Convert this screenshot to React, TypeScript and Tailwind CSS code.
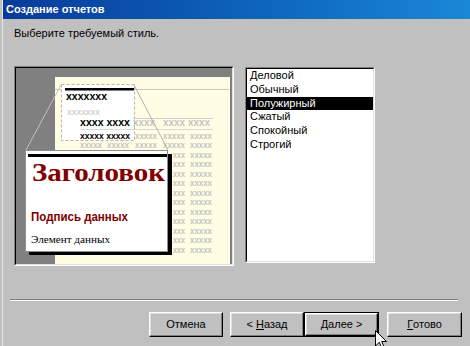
import React from "react";

const grayCols = [135, 163, 190];
const rowYs = [157.5, 167, 176.5, 186, 195.5, 205, 214.5, 224, 233.5, 243, 252.5];

function Preview() {
  return (
    <svg width={216} height={196} viewBox="16 68 216 196" className="block">
      <rect x={16} y={68} width={216} height={196} fill="#808080" />
      <rect x={55} y={77} width={175} height={187} fill="#fffee4" />
      <line x1={55} y1={89.5} x2={229} y2={89.5} stroke="#c8c8c8" />
      <rect x={61.5} y={84.5} width={73} height={56} fill="#ffffff" stroke="#b4b4b4" strokeDasharray="3 2" />
      <rect x={65} y={88} width={69} height={2.5} fill="#000" />
      <text x={66} y={100} fontFamily="Liberation Sans, sans-serif" fontWeight="bold" fontSize={10} fill="#000" textLength={41} lengthAdjust="spacingAndGlyphs">xxxxxxx</text>
      <text x={67} y={115} fontFamily="Liberation Sans, sans-serif" fontSize={8.5} fill="#c4c4c4" textLength={33} lengthAdjust="spacingAndGlyphs">xxxxxxx</text>
      <line x1={133} y1={118.5} x2={213} y2={118.5} stroke="#d0d0d0" />
      <text x={80} y={126} fontFamily="Liberation Sans, sans-serif" fontWeight="bold" fontSize={10} fill="#000" textLength={50} lengthAdjust="spacingAndGlyphs">xxxx xxxx</text>
      {[133, 163, 188].map((x) => (
        <text key={x} x={x} y={126} fontFamily="Liberation Sans, sans-serif" fontWeight="bold" fontSize={10} fill="#c4c4c4" textLength={22} lengthAdjust="spacingAndGlyphs">xxxx</text>
      ))}
      <line x1={80} y1={129.5} x2={213} y2={129.5} stroke="#d8d8d8" />
      <text x={80} y={139} fontFamily="Liberation Sans, sans-serif" fontWeight="bold" fontSize={8.5} fill="#000" textLength={50} lengthAdjust="spacingAndGlyphs">xxxxx xxxxx</text>
      {grayCols.map((x) => (
        <text key={x} x={x} y={139} fontFamily="Liberation Sans, sans-serif" fontWeight="bold" fontSize={8.5} fill="#c4c4c4" textLength={22} lengthAdjust="spacingAndGlyphs">xxxxx</text>
      ))}
      {[80, 107, 135, 163, 190].map((x) => (
        <text key={x} x={x} y={148} fontFamily="Liberation Sans, sans-serif" fontWeight="bold" fontSize={8.5} fill="#c4c4c4" textLength={22} lengthAdjust="spacingAndGlyphs">xxxxx</text>
      ))}
      {rowYs.map((y) => (
        <g key={y}>
          <text x={173} y={y} fontFamily="Liberation Sans, sans-serif" fontWeight="bold" fontSize={8.5} fill="#c4c4c4" textLength={12} lengthAdjust="spacingAndGlyphs">xxx</text>
          <text x={190} y={y} fontFamily="Liberation Sans, sans-serif" fontWeight="bold" fontSize={8.5} fill="#c4c4c4" textLength={22} lengthAdjust="spacingAndGlyphs">xxxxx</text>
        </g>
      ))}
      <line x1={61} y1={85} x2={26} y2={150} stroke="#c0c0c0" />
      <line x1={134} y1={85} x2={168} y2={150} stroke="#b0b0b0" />
      {/* callout */}
      <rect x={29} y={154} width={143} height={101} fill="#000" />
      <rect x={25.5} y={150.5} width={142} height={101} fill="#fff" stroke="#909090" />
      <rect x={28} y={154} width={139} height={3} fill="#000" />
      <text x={32} y={181} fontFamily="Liberation Serif, serif" fontWeight="bold" fontSize={26} fill="#800000" textLength={133} lengthAdjust="spacingAndGlyphs">Заголовок</text>
      <text x={31} y={221} fontFamily="Liberation Sans, sans-serif" fontWeight="bold" fontSize={12} fill="#800000" textLength={97} lengthAdjust="spacingAndGlyphs">Подпись данных</text>
      <text x={31} y={243} fontFamily="Liberation Serif, serif" fontSize={11} fill="#000" textLength={79} lengthAdjust="spacingAndGlyphs">Элемент данных</text>
    </svg>
  );
}

const items = ["Деловой", "Обычный", "Полужирный", "Сжатый", "Спокойный", "Строгий"];

function Btn({ children, className = "" }: { children: React.ReactNode; className?: string }) {
  return (
    <div
      className={`h-[25px] flex items-center justify-center bg-[#c0c0c0] border-t border-l border-white border-r border-b border-r-black border-b-black shadow-[inset_-1px_-1px_0_#808080,inset_1px_1px_0_#dfdfdf] text-[11px] text-black ${className}`}
    >
      {children}
    </div>
  );
}

export default function App() {
  return (
    <div className="w-[470px] h-[346px] bg-[#c0c0c0] relative overflow-hidden font-['Liberation_Sans',Arial,sans-serif] text-[11px] text-black pl-[2px]">
      <div className="h-full flex flex-col border-l border-[#e8e8e8]">
        <div className="h-[19px] flex items-center pl-[3px] bg-gradient-to-r from-[#0a3a9a] to-[#1a88d6] text-white font-bold text-[11px]">
          Создание отчетов
        </div>
        <div className="mt-[8px] h-[13px] leading-[13px] pl-[11px]">Выберите требуемый стиль.</div>
        <div className="mt-[26px] pl-[11px] flex items-start">
          <div className="w-[220px] h-[200px] border-t border-l border-[#808080] border-r border-b border-r-white border-b-white">
            <div className="w-[218px] h-[198px] border-t border-l border-black border-r border-b border-r-[#dfdfdf] border-b-[#dfdfdf]">
              <Preview />
            </div>
          </div>
          <div className="ml-[11px] mt-[1px] w-[130px] h-[196px] border-t border-l border-[#808080] border-r border-b border-r-white border-b-white">
            <div className="w-[128px] h-[194px] border-t border-l border-black border-r border-b border-r-[#dfdfdf] border-b-[#dfdfdf] bg-white">
              {items.map((it) => (
                <div
                  key={it}
                  className={`h-[13.8px] leading-[13.8px] pl-[3px] whitespace-nowrap ${it === "Полужирный" ? "bg-black text-white" : "text-black"}`}
                >
                  {it}
                </div>
              ))}
            </div>
          </div>
        </div>
        <div className="mt-[33px] ml-[7px] w-[448px] h-[2px] border-t border-[#808080] border-b border-b-white" />
        <div className="mt-[11px] ml-[146px] flex">
          <Btn className="w-[74px]">Отмена</Btn>
          <Btn className="w-[74px] ml-[7px]">
            &lt;&nbsp;<u>Н</u>азад
          </Btn>
          <div className="w-[75px] h-[25px] border border-black">
            <div className="w-[73px] h-[23px] flex items-center justify-center bg-[#c0c0c0] border-t border-l border-white border-r border-b border-r-black border-b-black shadow-[inset_-1px_-1px_0_#808080,inset_1px_1px_0_#dfdfdf] text-[11px]">
              <u>Д</u>алее&nbsp;&gt;
            </div>
          </div>
          <Btn className="w-[75px] ml-[8px]">
            <u>Г</u>отово
          </Btn>
        </div>
      </div>
      <svg className="absolute left-[375px] top-[330px]" width={13} height={20} viewBox="0 0 13 20">
        <polygon points="0.5,0.5 0.5,16 4.3,12.3 7,18.5 9.3,17.5 6.7,11.5 11.5,11.5" fill="#fff" stroke="#000" strokeWidth={1} />
      </svg>
    </div>
  );
}
